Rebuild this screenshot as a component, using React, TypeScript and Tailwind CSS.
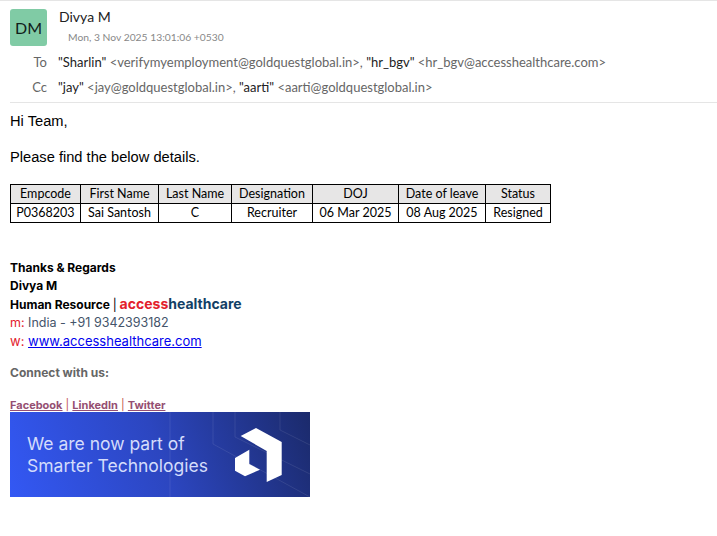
const columns = [
  { head: "Empcode", cell: "P0368203", width: "w-[70px]" },
  { head: "First Name", cell: "Sai Santosh", width: "w-[78px]" },
  { head: "Last Name", cell: "C", width: "w-[73px]" },
  { head: "Designation", cell: "Recruiter", width: "w-[81px]" },
  { head: "DOJ", cell: "06 Mar 2025", width: "w-[86px]" },
  { head: "Date of leave", cell: "08 Aug 2025", width: "w-[87px]" },
  { head: "Status", cell: "Resigned", width: "w-[65px]" },
];

const Banner = () => (
  <div className="relative w-[300px] h-[85px] overflow-hidden bg-[linear-gradient(70deg,#3358f4_0%,#2c46c0_50%,#1b2a6b_100%)]">
    <svg className="absolute inset-0" width="300" height="85" viewBox="0 0 300 85" fill="none">
      <path d="M160 0V85M203 0V32L300 85M225 0V25L300 62M270 0V18L300 33" stroke="#ffffff" strokeOpacity="0.09" />
      <path d="M230.7 24L246 16L271.7 30V63L256.7 70V39Z" fill="#fff" />
      <path d="M225 46L239.3 37.7V52L250 57.7L235 64.3L225 58.7Z" fill="#fff" />
    </svg>
    <div className="relative pl-[17px] pt-[21px] font-['Inter',sans-serif] text-[17.5px] leading-[21.5px] text-[#d4dcfb]">
      <div>We are now part of</div>
      <div>Smarter Technologies</div>
    </div>
  </div>
);

export default function App() {
  return (
    <div className="min-h-[536px] bg-white border-t border-[#e5e5e5] font-['Lato',sans-serif] text-black">
      <div className="pl-[10px]">
        <div className="flex pt-[8px] gap-3">
          <div className="w-[37px] h-[37px] rounded-[3px] bg-[#80cba5] flex items-center justify-center text-[16px] text-[#10201a]">
            DM
          </div>
          <div className="-mt-[1px]">
            <div className="text-[14px] leading-[17px] text-[#222]">Divya M</div>
            <div className="mt-[6px] ml-[9px] text-[10.3px] leading-[13px] text-[#888]">
              Mon, 3 Nov 2025 13:01:06 +0530
            </div>
          </div>
        </div>
        <div className="mt-[4px] flex text-[13px] leading-[25px] text-[#666]">
          <div className="w-[37px] text-right">To</div>
          <div className="ml-[11px]">
            <span className="text-[#222]">"Sharlin"</span> &lt;verifymyemployment@goldquestglobal.in&gt;,{" "}
            <span className="text-[#222]">"hr_bgv"</span> &lt;hr_bgv@accesshealthcare.com&gt;
          </div>
        </div>
        <div className="flex text-[13px] leading-[25px] text-[#666]">
          <div className="w-[37px] text-right">Cc</div>
          <div className="ml-[11px]">
            <span className="text-[#222]">"jay"</span> &lt;jay@goldquestglobal.in&gt;,{" "}
            <span className="text-[#222]">"aarti"</span> &lt;aarti@goldquestglobal.in&gt;
          </div>
        </div>
        <div className="mt-[2px] border-t border-[#e5e5e5]" />
      </div>

      <div className="px-[10px]">
        <p className="mt-[10px] font-['Liberation_Sans',sans-serif] text-[14.67px] leading-[17px]">Hi Team,</p>
        <p className="mt-[19px] font-['Liberation_Sans',sans-serif] text-[14.67px] leading-[17px]">
          Please find the below details.
        </p>

        <table className="mt-[18px] border-collapse table-fixed w-[540px] text-[12.5px] leading-[18px] text-center">
          <thead>
            <tr className="bg-[#e7e6e6]">
              {columns.map((c) => (
                <th key={c.head} className={`${c.width} border border-black font-normal p-0`}>
                  {c.head}
                </th>
              ))}
            </tr>
          </thead>
          <tbody>
            <tr>
              {columns.map((c) => (
                <td key={c.head} className="border border-black p-0">
                  {c.cell}
                </td>
              ))}
            </tr>
          </tbody>
        </table>

        <div className="mt-[36px] font-['Inter',sans-serif] text-[12px] leading-[18px]">
          <div className="font-bold">Thanks &amp; Regards</div>
          <div className="font-bold">Divya M</div>
          <div className="font-bold">
            Human Resource <span className="font-normal">|</span>{" "}
            <span className="text-[14px] text-[#e3202c]">access</span>
            <span className="text-[14px] text-[#123f66]">healthcare</span>
          </div>
          <div className="text-[#44546a] text-[12.5px]">
            <span className="text-[#e3202c]">m:</span> India - +91 9342393182
          </div>
          <div className="text-[13px]">
            <span className="text-[#e3202c]">w:</span>{" "}
            <a href="#" className="text-[#0000ee] underline">www.accesshealthcare.com</a>
          </div>
          <div className="mt-[14px] h-[18px] font-bold text-[#666]">Connect with us:</div>
        </div>

        <div className="mt-[17px] font-['Inter',sans-serif] text-[11px] leading-[13px] font-bold text-[#954f72]">
          <a href="#" className="underline">Facebook</a>
          <span className="text-[#c0504d] font-normal"> | </span>
          <a href="#" className="underline">LinkedIn</a>
          <span className="text-[#c0504d] font-normal"> | </span>
          <a href="#" className="underline">Twitter</a>
        </div>
        <Banner />
      </div>
    </div>
  );
}
